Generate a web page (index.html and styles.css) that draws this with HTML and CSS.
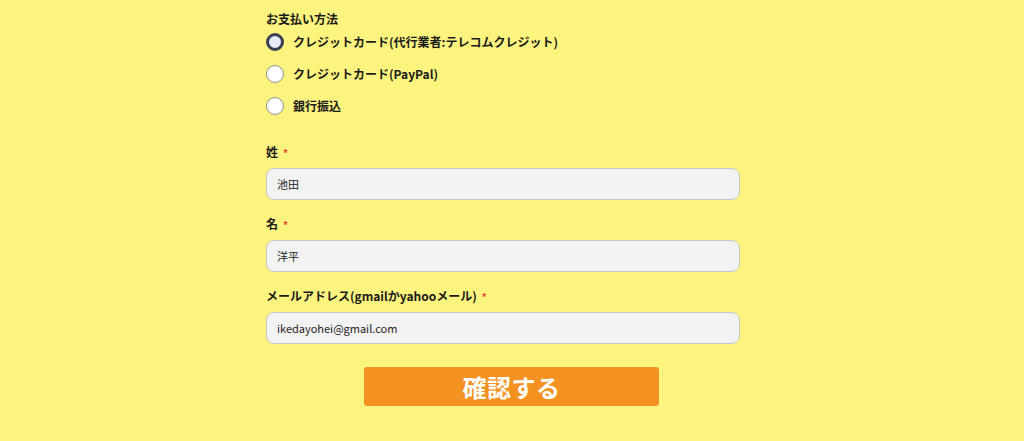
FILE: index.html
```html
<!DOCTYPE html>
<html lang="ja">
<head>
<meta charset="utf-8">
<link rel="stylesheet" href="styles.css">
</head>
<body>
<form class="form">
  <div class="section">
    <div class="label">お支払い方法</div>
    <div class="radios">
      <label class="radio"><span class="dot checked"></span>クレジットカード(代行業者:テレコムクレジット)</label>
      <label class="radio"><span class="dot"></span>クレジットカード(PayPal)</label>
      <label class="radio"><span class="dot"></span>銀行振込</label>
    </div>
  </div>
  <div class="field first">
    <div class="label">姓<span class="req">*</span></div>
    <div class="input">池田</div>
  </div>
  <div class="field">
    <div class="label">名<span class="req">*</span></div>
    <div class="input">洋平</div>
  </div>
  <div class="field">
    <div class="label">メールアドレス(gmailかyahooメール)<span class="req">*</span></div>
    <div class="input">ikedayohei@gmail.com</div>
  </div>
  <div class="actions">
    <button type="button" class="submit">確認する</button>
  </div>
</form>
</body>
</html>
```
FILE: styles.css
```css
html, body {
  margin: 0;
  padding: 0;
  background: #fcf47e;
  height: 100%;
}
body {
  font-family: "Noto Sans CJK JP", "Noto Sans", sans-serif;
  color: #1a1a1a;
}
.form {
  width: 474px;
  margin: 0 auto 0 266px;
  padding-top: 9px;
  display: flex;
  flex-direction: column;
}
.label {
  font-size: 12px;
  font-weight: 700;
  line-height: 20px;
  display: flex;
  align-items: center;
}
.req {
  color: #e8453c;
  font-size: 10px;
  margin-left: 5px;
  margin-top: 3px;
}
.radios {
  display: flex;
  flex-direction: column;
  gap: 12px;
  margin-top: 3px;
}
.radio {
  display: flex;
  align-items: center;
  font-size: 12px;
  font-weight: 700;
  line-height: 20px;
  gap: 9px;
}
.dot {
  width: 18px;
  height: 18px;
  box-sizing: border-box;
  border-radius: 50%;
  border: 1px solid #8f8f8f;
  background: #fff;
}
.dot.checked {
  border: 3px solid #3a3f52;
  background: #e6ebf7;
}
.field {
  display: flex;
  flex-direction: column;
  margin-top: 12px;
  gap: 5px;
}
.field.first {
  margin-top: 24px;
}
.input {
  height: 32px;
  box-sizing: border-box;
  border: 1px solid #c8c8c8;
  border-radius: 8px;
  background: #f2f2f2;
  font-size: 11px;
  line-height: 30px;
  padding: 0 10px;
  color: #222;
}
.actions {
  display: flex;
  justify-content: center;
  margin-top: 23px;
  margin-left: 17px;
}
.submit {
  width: 295px;
  height: 39px;
  border: none;
  border-radius: 3px;
  background: #f39220;
  color: #fff;
  font-family: "Noto Sans CJK JP", sans-serif;
  font-weight: 700;
  font-size: 24px;
  letter-spacing: 0.5px;
  padding: 0;
}
```
